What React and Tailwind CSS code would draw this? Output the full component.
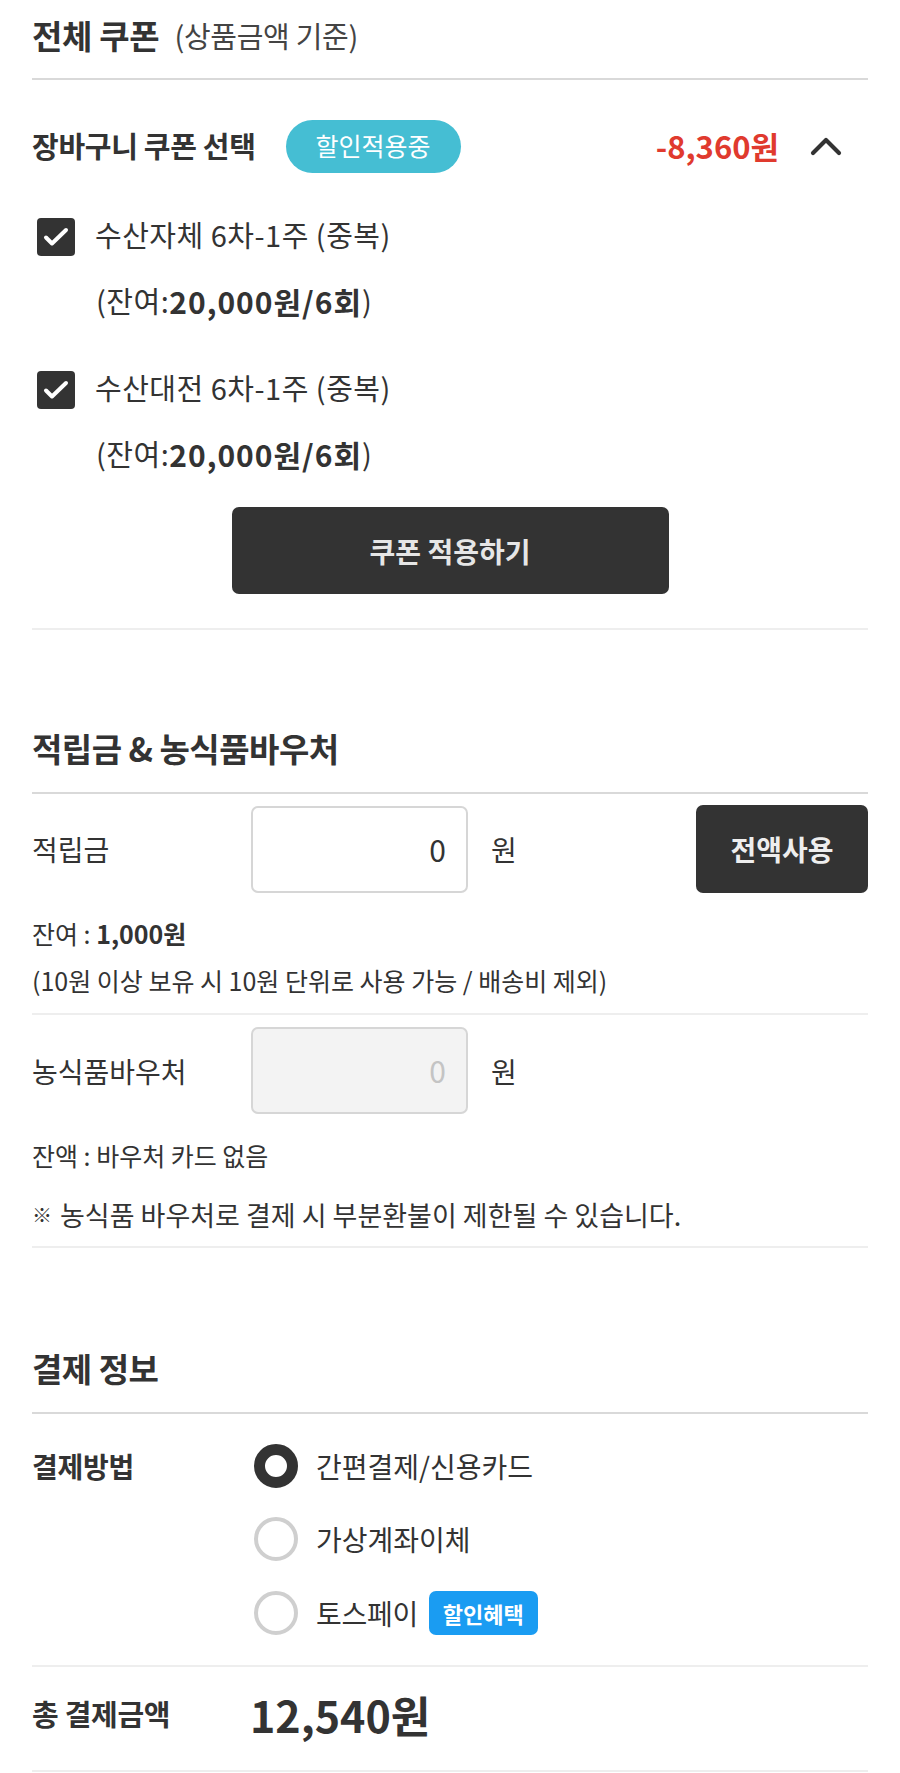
import React from "react";

const font = { fontFamily: '"Noto Sans CJK KR", "Noto Sans", sans-serif' };

function Check() {
  return (
    <div className="w-[38px] h-[38px] rounded-[4px] bg-[#333] flex items-center justify-center shrink-0">
      <svg width="30" height="30" viewBox="0 0 30 30" fill="none">
        <path d="M5 15.5l6 6L25 8" stroke="#fff" strokeWidth="4" strokeLinecap="round" strokeLinejoin="round" />
      </svg>
    </div>
  );
}

function Radio({ on }) {
  return on ? (
    <div className="w-[44px] h-[44px] rounded-full border-[11px] border-[#333] bg-white shrink-0" />
  ) : (
    <div className="w-[44px] h-[44px] rounded-full border-[4px] border-[#cfcfcf] bg-white shrink-0" />
  );
}

export default function App() {
  return (
    <div className="w-[900px] bg-white text-[#333] px-[32px]" style={font}>
      {/* 전체 쿠폰 */}
      <div className="h-[80px] flex items-center gap-[15px] border-b-2 border-[#d9d9d9] pb-[6px]">
        <span className="text-[33px] font-bold tracking-[-0.3px]">전체 쿠폰</span>
        <span className="text-[29px] text-[#444] tracking-[-0.3px]">(상품금액 기준)</span>
      </div>

      <div className="mt-[38px] h-[56px] flex items-center">
        <span className="text-[29px] font-bold tracking-[-0.3px]">장바구니 쿠폰 선택</span>
        <span className="ml-[30px] w-[175px] h-[53px] rounded-full bg-[#45bed3] text-white text-[25px] flex items-center justify-center">
          할인적용중
        </span>
        <span className="ml-auto text-[31px] font-bold text-[#e03a2e]">-8,360원</span>
        <svg className="ml-[30px] mr-[25px]" width="34" height="22" viewBox="0 0 34 22" fill="none">
          <path d="M4 18L17 5l13 13" stroke="#333" strokeWidth="4.2" strokeLinecap="round" strokeLinejoin="round" />
        </svg>
      </div>

      <div className="mt-[41px] h-[44px] flex items-center pl-[5px]">
        <Check />
        <span className="ml-[20px] text-[29px] -mt-[4px] tracking-[0.5px]">수산자체 6차-1주 (중복)</span>
      </div>
      <div className="mt-[25px] h-[34px] flex items-center pl-[64px] text-[29px] tracking-[0.5px]">
        (잔여:<b className="font-bold text-[30px] tracking-[1px]">20,000원/6회</b>)
      </div>

      <div className="mt-[50px] h-[44px] flex items-center pl-[5px]">
        <Check />
        <span className="ml-[20px] text-[29px] -mt-[4px] tracking-[0.5px]">수산대전 6차-1주 (중복)</span>
      </div>
      <div className="mt-[25px] h-[34px] flex items-center pl-[64px] text-[29px] tracking-[0.5px]">
        (잔여:<b className="font-bold text-[30px] tracking-[1px]">20,000원/6회</b>)
      </div>

      <div className="mt-[36px] flex justify-center">
        <button className="w-[437px] h-[87px] rounded-[7px] bg-[#333] text-[#e6e6e6] text-[28px] font-bold">
          쿠폰 적용하기
        </button>
      </div>

      <div className="mt-[34px] border-b-2 border-[#eeeeee]" />

      {/* 적립금 */}
      <div className="mt-[99px] h-[40px] flex items-center">
        <span className="text-[33px] font-bold tracking-[-0.5px]">적립금 &amp; 농식품바우처</span>
      </div>
      <div className="mt-[23px] border-b-2 border-[#d9d9d9]" />

      <div className="mt-[11px] h-[88px] flex items-center">
        <span className="w-[219px] text-[28px]">적립금</span>
        <div className="w-[217px] h-[87px] rounded-[7px] border-2 border-[#d6d6d6] flex items-center justify-end pr-[20px] text-[30px]">
          0
        </div>
        <span className="ml-[23px] text-[28px]">원</span>
        <button className="ml-auto w-[172px] h-[88px] rounded-[7px] bg-[#333] text-[#eeeeee] text-[28px] font-bold">
          전액사용
        </button>
      </div>

      <div className="mt-[26px] h-[30px] flex items-center text-[25px]">
        잔여 :&nbsp;<b className="font-bold">1,000원</b>
      </div>
      <div className="mt-[17px] h-[30px] flex items-center text-[25px]">
        (10원 이상 보유 시 10원 단위로 사용 가능 / 배송비 제외)
      </div>
      <div className="mt-[17px] border-b-2 border-[#eeeeee]" />

      <div className="mt-[12px] h-[87px] flex items-center">
        <span className="w-[219px] text-[28px]">농식품바우처</span>
        <div className="w-[217px] h-[87px] rounded-[7px] border-2 border-[#d6d6d6] bg-[#f3f3f3] flex items-center justify-end pr-[20px] text-[30px] text-[#c4c4c4]">
          0
        </div>
        <span className="ml-[23px] text-[28px]">원</span>
      </div>

      <div className="mt-[27px] h-[30px] flex items-center text-[25px]">잔액 : 바우처 카드 없음</div>
      <div className="mt-[29px] h-[30px] flex items-center text-[27px]">
        <span className="text-[20px] font-bold mr-[8px]">※</span>
        농식품 바우처로 결제 시 부분환불이 제한될 수 있습니다.
      </div>
      <div className="mt-[16px] border-b-2 border-[#eeeeee]" />

      {/* 결제 정보 */}
      <div className="mt-[101px] h-[40px] flex items-center">
        <span className="text-[33px] font-bold tracking-[-0.5px]">결제 정보</span>
      </div>
      <div className="mt-[23px] border-b-2 border-[#d9d9d9]" />

      <div className="flex">
        <div className="w-[222px] mt-[30px] h-[44px] flex items-center">
          <span className="text-[28px] font-bold tracking-[-0.3px]">결제방법</span>
        </div>
        <div className="flex flex-col">
          <div className="mt-[30px] h-[44px] flex items-center gap-[18px]">
            <Radio on />
            <span className="text-[28px]">간편결제/신용카드</span>
          </div>
          <div className="mt-[29px] h-[44px] flex items-center gap-[18px]">
            <Radio />
            <span className="text-[28px]">가상계좌이체</span>
          </div>
          <div className="mt-[30px] h-[44px] flex items-center gap-[18px]">
            <Radio />
            <span className="text-[28px] tracking-[-0.3px]">토스페이</span>
            <span className="-ml-[7px] h-[44px] px-[14px] rounded-[7px] bg-[#1a9cf2] text-white text-[22px] font-bold flex items-center">
              할인혜택
            </span>
          </div>
        </div>
      </div>
      <div className="mt-[30px] border-b-2 border-[#eeeeee]" />

      <div className="mt-[25px] h-[44px] flex items-center">
        <span className="w-[218px] text-[29px] font-bold tracking-[-0.3px]">총 결제금액</span>
        <span className="text-[43px] font-bold">12,540원</span>
      </div>
      <div className="mt-[34px] border-b-2 border-[#eeeeee]" />
    </div>
  );
}
